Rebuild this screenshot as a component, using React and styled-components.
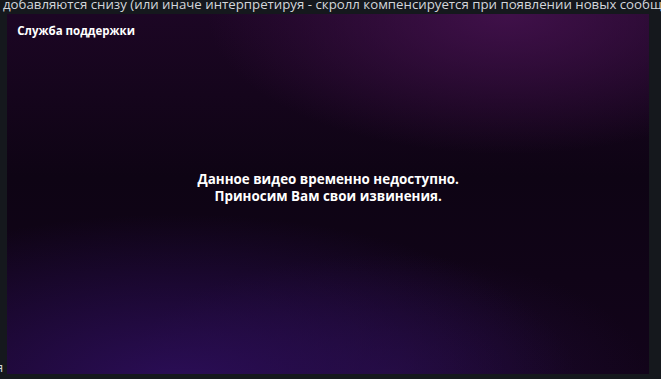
import styled, { createGlobalStyle } from 'styled-components'

const GlobalStyle = createGlobalStyle`
  html, body {
    margin: 0;
    padding: 0;
    background: #15181d;
    overflow: hidden;
  }
  body {
    font-family: "Open Sans", "Noto Sans", sans-serif;
    color: #d3d6db;
  }
`

const Page = styled.div`
  width: 661px;
  height: 379px;
  overflow: hidden;
`

const Lead = styled.p`
  margin: -5px 0 0 3px;
  font-size: 13.25px;
  line-height: 19px;
  white-space: nowrap;
`

const Stage = styled.div`
  display: flex;
  align-items: flex-end;
`

const Tail = styled.span`
  font-size: 13px;
  line-height: 14px;
  margin-left: -4px;
  margin-right: 4px;
  margin-bottom: 0;
`

const Player = styled.div`
  position: relative;
  width: 642px;
  height: 360px;
  display: flex;
  flex-direction: column;
  background:
    radial-gradient(ellipse 300px 140px at 500px 0px, rgba(70, 18, 80, 0.85), transparent 100%),
    radial-gradient(ellipse 400px 170px at 170px 370px, rgba(44, 14, 90, 0.95), transparent 100%),
    radial-gradient(ellipse 260px 120px at 380px 360px, rgba(40, 14, 70, 0.6), transparent 100%),
    linear-gradient(180deg, #1c0624 0%, #0e0414 45%, #12041a 100%);
`

const Title = styled.div`
  padding: 9px 10px;
  font-size: 11.5px;
  font-weight: 700;
  color: #ffffff;
`

const Message = styled.div`
  flex: 1;
  display: flex;
  align-items: center;
  justify-content: center;
  padding-bottom: 46px;
  text-align: center;
  font-size: 13.4px;
  line-height: 17px;
  font-weight: 700;
  color: #ffffff;
`

export default function App() {
  return (
    <Page>
      <GlobalStyle />
      <Lead>
        добавляются снизу (или иначе интерпретируя - скролл компенсируется при появлении новых сообщений)
      </Lead>
      <Stage>
        <Tail>я</Tail>
        <Player>
          <Title>Служба поддержки</Title>
          <Message>
            Данное видео временно недоступно.
            <br />
            Приносим Вам свои извинения.
          </Message>
        </Player>
      </Stage>
    </Page>
  )
}
